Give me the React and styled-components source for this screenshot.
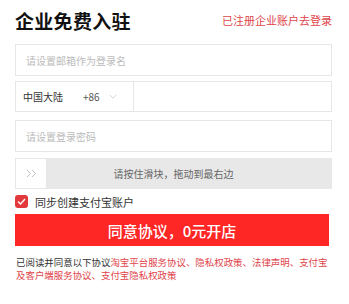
import styled, { createGlobalStyle } from "styled-components";

const GlobalStyle = createGlobalStyle`
    body {
        margin: 0;
        background: #FFFFFF;
        font-family: "Noto Sans CJK SC", "Noto Sans", sans-serif;
    }
`;

export default function App() {
    return (
        <>
            <GlobalStyle />
            <Page>
                <Header>
                    <Title>企业免费入驻</Title>
                    <LoginLink>已注册企业账户去登录</LoginLink>
                </Header>
                <Field>
                    <Placeholder>请设置邮箱作为登录名</Placeholder>
                </Field>
                <PhoneRow>
                    <Region>
                        <span>中国大陆</span>
                        <Code>+86</Code>
                        <Chevron viewBox="0 0 10 6">
                            <path d="M1 1l4 4 4-4" fill="none" stroke="#CCCCCC" strokeWidth="1" />
                        </Chevron>
                    </Region>
                    <PhoneInput />
                </PhoneRow>
                <Field gap={8}>
                    <Placeholder>请设置登录密码</Placeholder>
                </Field>
                <Slider>
                    <Handle>
                        <svg width="11" height="9" viewBox="0 0 11 9">
                            <path d="M1 1l3.5 3.5L1 8M6 1l3.5 3.5L6 8" fill="none" stroke="#BBBBBB" strokeWidth="0.9" />
                        </svg>
                    </Handle>
                    <SliderText>请按住滑块，拖动到最右边</SliderText>
                </Slider>
                <CheckRow>
                    <Check>
                        <svg width="9" height="7" viewBox="0 0 9 7">
                            <path d="M1 3.5l2.5 2.5L8 1" fill="none" stroke="#FFFFFF" strokeWidth="1.3" />
                        </svg>
                    </Check>
                    <CheckLabel>同步创建支付宝账户</CheckLabel>
                </CheckRow>
                <Submit>同意协议，0元开店</Submit>
                <Agreement>
                    已阅读并同意以下协议<Red>淘宝平台服务协议、隐私权政策、法律声明、支付宝及客户端服务协议、支付宝隐私权政策</Red>
                </Agreement>
            </Page>
        </>
    );
}

const Page = styled.div`
    display: flex;
    flex-direction: column;
    padding: 0 17px 0 15px;
`;

const Header = styled.div`
    display: flex;
    align-items: center;
    justify-content: space-between;
    height: 40px;
    margin-bottom: 4px;
`;

const Title = styled.h1`
    margin: 0;
    font-size: 19px;
    font-weight: 700;
    color: #111111;
    letter-spacing: 0.3px;
`;

const LoginLink = styled.a`
    font-size: 11px;
    color: #E0444A;
`;

const Field = styled.div`
    display: flex;
    align-items: center;
    height: 32px;
    box-sizing: border-box;
    border: 1px solid #E6E6E6;
    padding: 0 10px;
    margin-top: ${props => props.gap || 0}px;
`;

const Placeholder = styled.span`
    font-size: 10px;
    color: #BBBBBB;
`;

const PhoneRow = styled.div`
    display: flex;
    height: 31px;
    box-sizing: border-box;
    border: 1px solid #E6E6E6;
    margin-top: 5px;
`;

const Region = styled.div`
    display: flex;
    align-items: center;
    width: 110px;
    padding: 0 0 0 7px;
    border-right: 1px solid #E6E6E6;
    font-size: 10px;
    color: #333333;
`;

const Code = styled.span`
    margin-left: 20px;
    color: #555555;
`;

const Chevron = styled.svg`
    width: 8px;
    height: 5px;
    margin-left: 9px;
`;

const PhoneInput = styled.div`
    flex: 1;
`;

const Slider = styled.div`
    position: relative;
    display: flex;
    height: 31px;
    margin-top: 6px;
    background: #E8E8E8;
`;

const Handle = styled.div`
    position: relative;
    z-index: 1;
    display: flex;
    align-items: center;
    justify-content: center;
    width: 32px;
    box-sizing: border-box;
    background: #FFFFFF;
    border: 1px solid #E6E6E6;
`;

const SliderText = styled.span`
    position: absolute;
    inset: 0;
    display: flex;
    align-items: center;
    justify-content: center;
    font-size: 10px;
    color: #666666;
`;

const CheckRow = styled.div`
    display: flex;
    align-items: center;
    gap: 7px;
    height: 25px;
`;

const Check = styled.span`
    display: flex;
    align-items: center;
    justify-content: center;
    width: 13px;
    height: 13px;
    border-radius: 3px;
    background: #E4393C;
`;

const CheckLabel = styled.span`
    font-size: 11px;
    color: #333333;
`;

const Submit = styled.button`
    height: 32px;
    margin-right: 3px;
    border: none;
    background: #FF2626;
    color: #FFFFFF;
    font-family: "Noto Sans CJK SC", sans-serif;
    font-size: 15px;
    font-weight: 500;
    padding: 0;
`;

const Agreement = styled.p`
    margin: 10px 0 0 1px;
    font-size: 9.45px;
    line-height: 12.5px;
    color: #333333;
`;

const Red = styled.span`
    color: #E0444A;
`;
